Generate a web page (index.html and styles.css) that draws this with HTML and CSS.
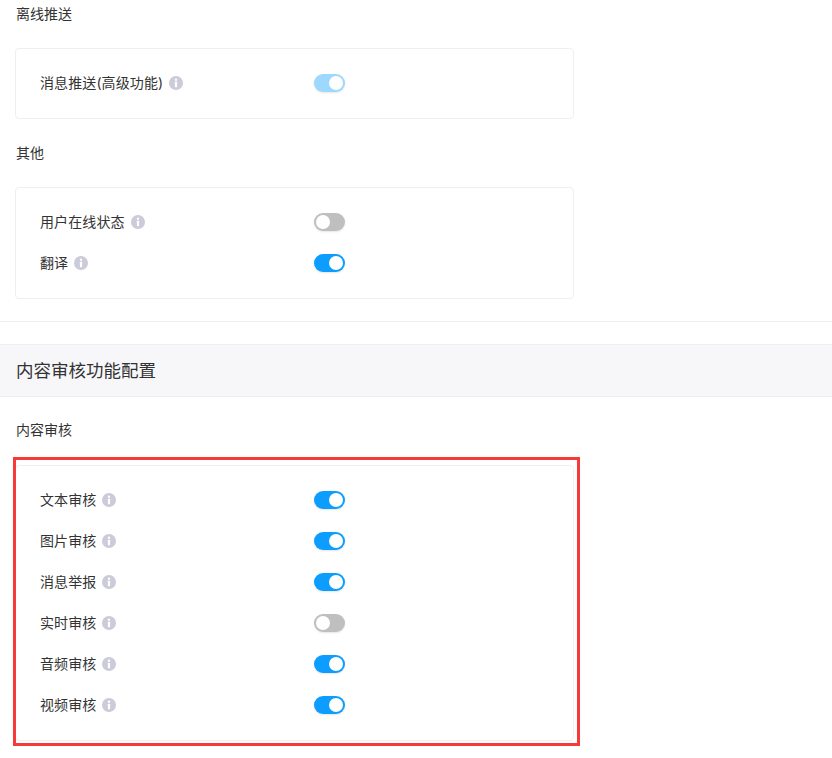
FILE: index.html
```html
<!DOCTYPE html>
<html lang="zh-CN">
<head>
<meta charset="utf-8">
<title>功能配置</title>
<link rel="stylesheet" href="styles.css">
</head>
<body>
<svg class="defs" width="0" height="0" aria-hidden="true">
  <symbol id="info" viewBox="0 0 14 14">
    <circle cx="7" cy="7" r="7" fill="#cbcbd9"/>
    <rect x="5.9" y="5.8" width="2.2" height="5.4" rx=".4" fill="#fff"/>
    <circle cx="7" cy="3.8" r="1.2" fill="#fff"/>
  </symbol>
</svg>
<main class="page">
  <section class="group group-first">
    <h3 class="group-title">离线推送</h3>
    <div class="card">
      <div class="row"><span class="label">消息推送(高级功能)</span><svg class="info"><use href="#info"/></svg><span class="switch on disabled"></span></div>
    </div>
  </section>
  <section class="group">
    <h3 class="group-title">其他</h3>
    <div class="card">
      <div class="row"><span class="label">用户在线状态</span><svg class="info"><use href="#info"/></svg><span class="switch"></span></div>
      <div class="row"><span class="label">翻译</span><svg class="info"><use href="#info"/></svg><span class="switch on"></span></div>
    </div>
  </section>
  <hr class="divider">
  <h2 class="band">内容审核功能配置</h2>
  <section class="group group-moderation">
    <h3 class="group-title">内容审核</h3>
    <div class="card">
      <div class="row"><span class="label">文本审核</span><svg class="info"><use href="#info"/></svg><span class="switch on"></span></div>
      <div class="row"><span class="label">图片审核</span><svg class="info"><use href="#info"/></svg><span class="switch on"></span></div>
      <div class="row"><span class="label">消息举报</span><svg class="info"><use href="#info"/></svg><span class="switch on"></span></div>
      <div class="row"><span class="label">实时审核</span><svg class="info"><use href="#info"/></svg><span class="switch"></span></div>
      <div class="row"><span class="label">音频审核</span><svg class="info"><use href="#info"/></svg><span class="switch on"></span></div>
      <div class="row"><span class="label">视频审核</span><svg class="info"><use href="#info"/></svg><span class="switch on"></span></div>
    </div>
    <div class="highlight"></div>
  </section>
</main>
</body>
</html>
```
FILE: styles.css
```css
* { box-sizing: border-box; }
html, body { margin: 0; padding: 0; background: #fff; }
body {
  font-family: Inter, "Noto Sans CJK SC", sans-serif;
  color: #333;
  overflow: hidden;
  height: 758px;
}
.defs { position: absolute; }
.page { width: 832px; }
.group { position: relative; padding-left: 15px; width: 574px; }
.group-first { margin-top: 4px; }
.group-title {
  margin: 0 0 24px 1px;
  font-size: 14px;
  font-weight: 400;
  line-height: 20px;
}
.card {
  border: 1px solid #eeeef4;
  border-radius: 4px;
  padding: 13px 24px 15px;
  background: #fff;
}
.group + .group { margin-top: 24px; }
.row {
  display: flex;
  align-items: center;
  height: 41px;
  font-size: 14px;
}
.label { white-space: nowrap; margin-bottom: 2px; letter-spacing: .1px; }
.info { width: 14px; height: 14px; margin: 0 0 0 6px; flex: none; }
.switch {
  position: absolute;
  left: 314px;
  width: 31px;
  height: 18px;
  border-radius: 9px;
  background: #bfbfbf;
  box-shadow: 0 1px 2px rgba(0,0,0,.1);
}
.switch::after {
  content: "";
  position: absolute;
  top: 2px;
  left: 2px;
  width: 14px;
  height: 14px;
  border-radius: 50%;
  background: #fff;
}
.switch.on { background: #0c9dff; }
.switch.on::after { left: 15px; }
.switch.disabled { background: #9dd8ff; }
.divider {
  margin: 22px 0 0;
  border: 0;
  border-top: 1px solid #eeeef1;
}
.band {
  margin: 22px 0 0;
  height: 53px;
  padding-left: 16px;
  background: #f7f7fa;
  border-top: 1px solid #eeeef1;
  border-bottom: 1px solid #eeeef1;
  font-size: 17.5px;
  font-weight: 400;
  line-height: 51px;
}
.group-moderation.group-moderation { margin-top: 23px; }
.group-moderation .group-title { margin-bottom: 25px; }
.highlight {
  position: absolute;
  left: 13px;
  top: 37px;
  width: 567px;
  height: 289px;
  border: 3px solid #f63a3a;
  pointer-events: none;
}
```
